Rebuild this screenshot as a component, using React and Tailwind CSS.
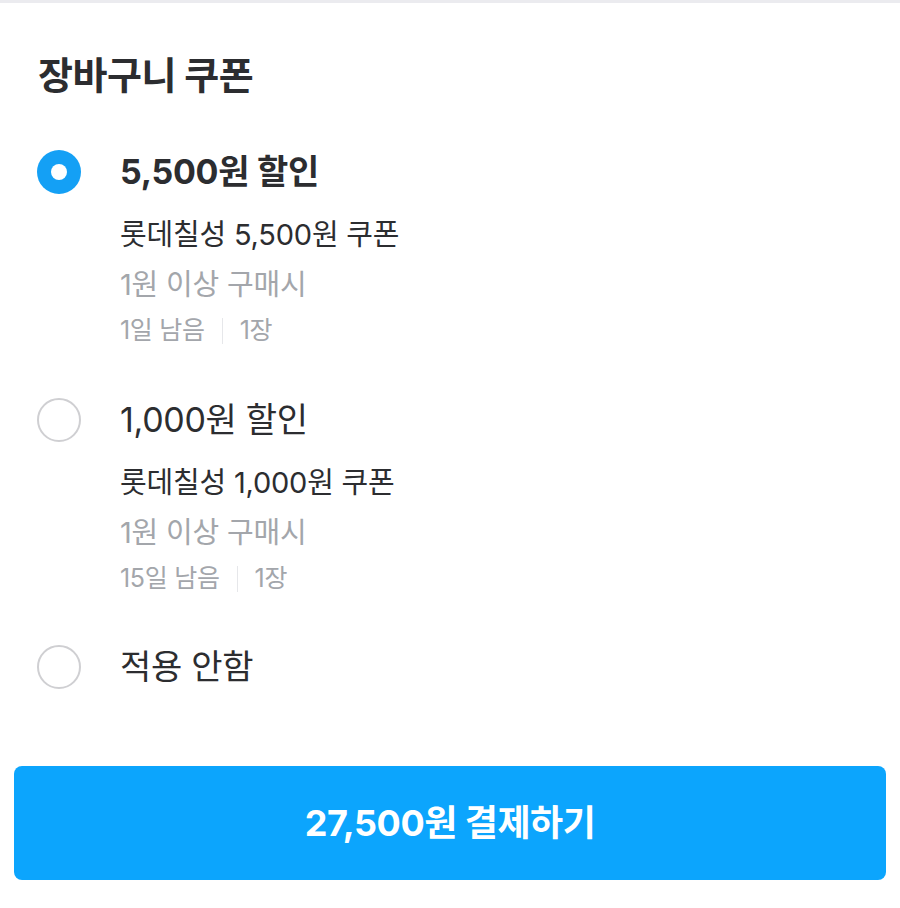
export default function App() {
  const font = { fontFamily: 'Inter, "Noto Sans CJK KR", "Noto Sans", sans-serif' };
  const Radio = ({ checked }) =>
    checked ? (
      <div className="w-[44px] h-[44px] rounded-full bg-[#14a0f5] flex items-center justify-center shrink-0">
        <div className="w-[16px] h-[16px] rounded-full bg-white" />
      </div>
    ) : (
      <div className="w-[44px] h-[44px] rounded-full border-2 border-[#cfcfd2] bg-white shrink-0" />
    );

  const Option = ({ checked, title, name, cond, days, count, bold }) => (
    <div className="flex pl-[37px]">
      <Radio checked={checked} />
      <div className="ml-[39px] flex flex-col">
        <div className={`h-[44px] leading-[44px] text-[34px] text-[#2c2d30] ${bold ? 'font-bold' : 'font-normal'} tracking-[-0.3px] whitespace-nowrap`}>{title}</div>
        {name && (
          <>
            <div className="mt-[16px] h-[50px] leading-[50px] text-[29px] text-[#2c2d30] tracking-[-0.2px] whitespace-nowrap">{name}</div>
            <div className="h-[50px] leading-[50px] text-[29px] text-[#a3a6ab] tracking-[-0.2px] whitespace-nowrap">{cond}</div>
            <div className="h-[42px] flex items-center text-[25px] text-[#a3a6ab] tracking-[-0.3px] whitespace-nowrap">
              <span>{days}</span>
              <span className="mx-[17px] w-[1px] h-[26px] bg-[#e6e7ea]" />
              <span>{count}</span>
            </div>
          </>
        )}
      </div>
    </div>
  );

  return (
    <div className="w-[900px] h-[908px] bg-white flex flex-col" style={font}>
      <div className="h-[3px] bg-[#ebebef]" />
      <div className="pt-[47px] pl-[38px] h-[97px]">
        <div className="h-[50px] leading-[50px] text-[38px] font-bold text-[#2c2d30] tracking-[-0.5px]">장바구니 쿠폰</div>
      </div>
      <div className="mt-[50px]">
        <Option checked bold title="5,500원 할인" name="롯데칠성 5,500원 쿠폰" cond="1원 이상 구매시" days="1일 남음" count="1장" />
      </div>
      <div className="mt-[46px]">
        <Option title="1,000원 할인" name="롯데칠성 1,000원 쿠폰" cond="1원 이상 구매시" days="15일 남음" count="1장" />
      </div>
      <div className="mt-[45px]">
        <Option title="적용 안함" />
      </div>
      <div className="mt-[77px] px-[14px]">
        <button className="w-full h-[114px] rounded-[8px] bg-[#0ca5fd] text-white text-[36px] font-bold tracking-[-0.5px] flex items-center justify-center">
          27,500원 결제하기
        </button>
      </div>
    </div>
  );
}
